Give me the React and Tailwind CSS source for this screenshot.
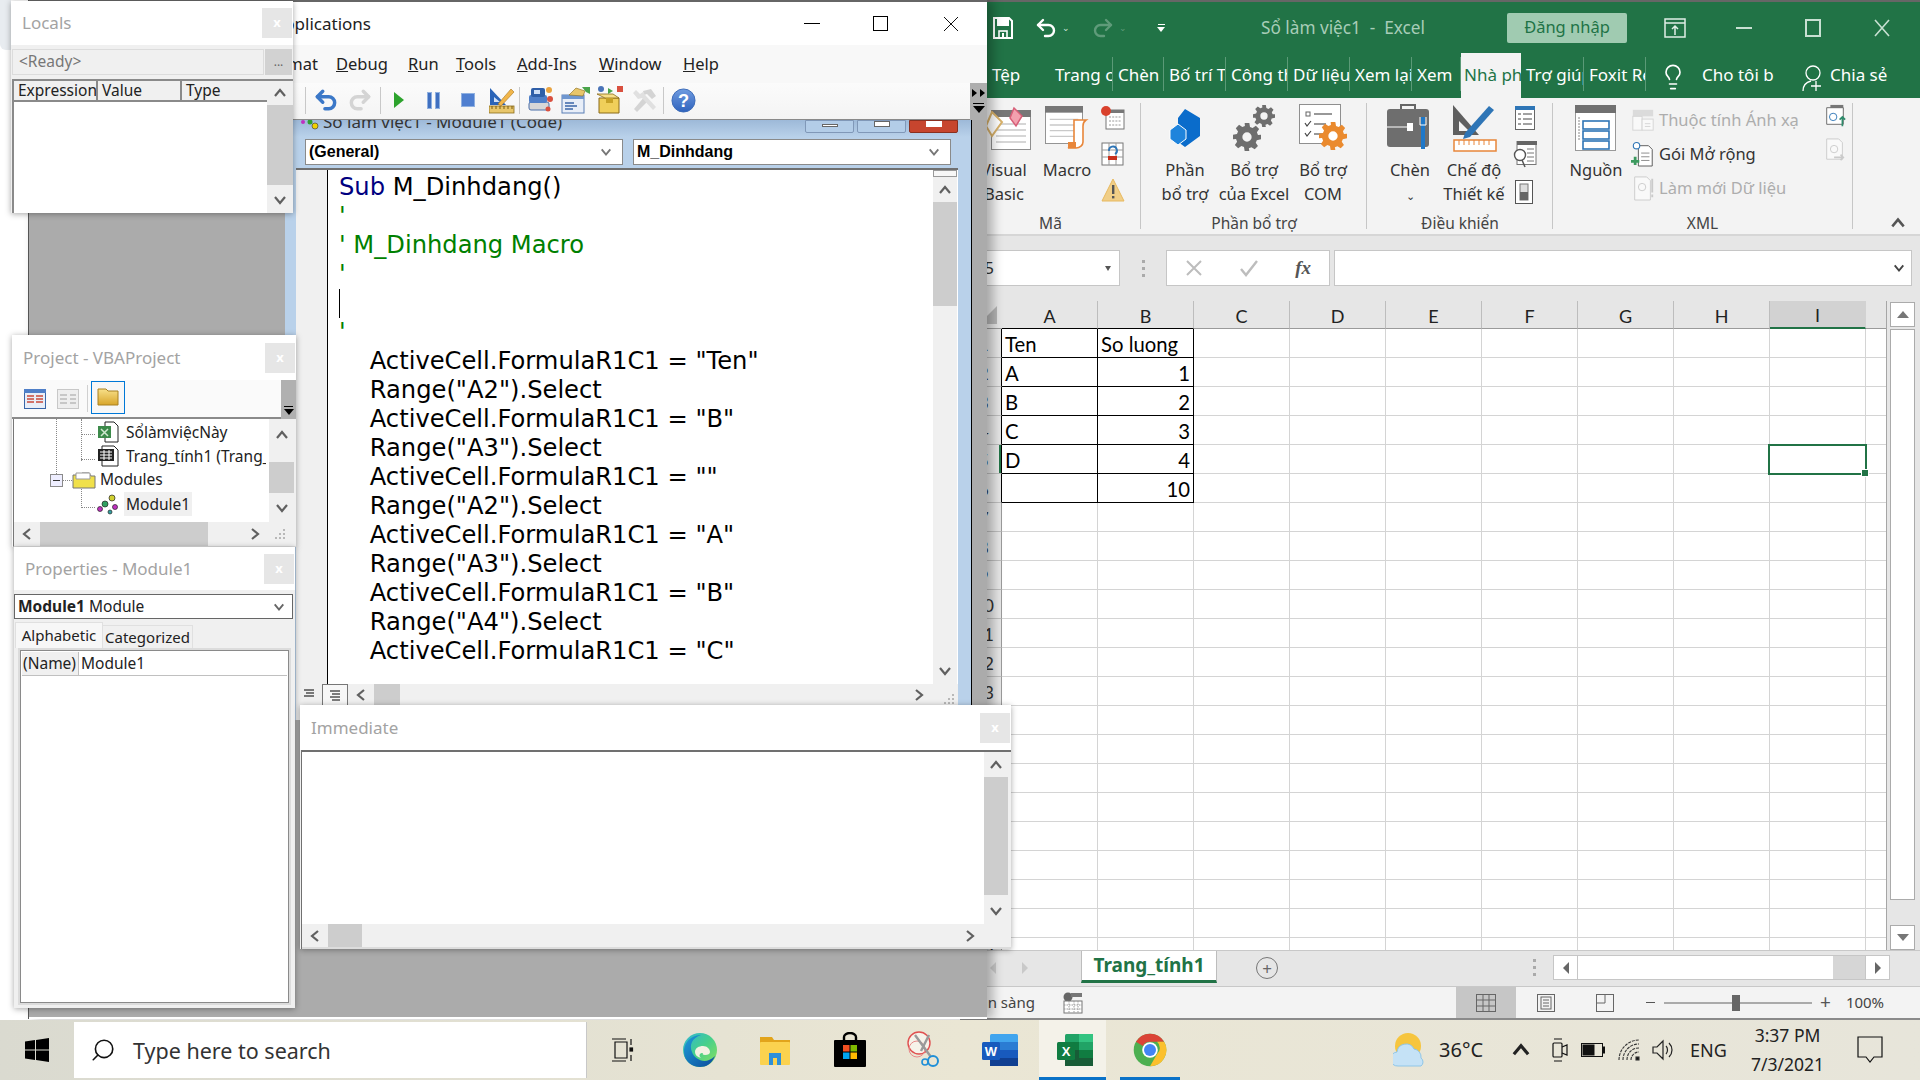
import React from "react";
import { Undo2, Redo2, Lightbulb, Search } from "lucide-react";

const Chev = ({ d = "up", s = 14, c = "#606060" }) => {
  const p = { up: "M2 10 L7 4 L12 10", down: "M2 4 L7 10 L12 4", left: "M10 2 L4 7 L10 12", right: "M4 2 L10 7 L4 12" }[d];
  return (<svg width={s} height={s} viewBox="0 0 14 14" fill="none"><path d={p} stroke={c} strokeWidth="2.2" /></svg>);
};
const Grip = () => (
  <svg width="12" height="12" viewBox="0 0 12 12" fill="#b8b8b8"><rect x="9" y="1" width="2" height="2"/><rect x="5" y="5" width="2" height="2"/><rect x="9" y="5" width="2" height="2"/><rect x="1" y="9" width="2" height="2"/><rect x="5" y="9" width="2" height="2"/><rect x="9" y="9" width="2" height="2"/></svg>
);
const VScroll = ({ w, before, thumb, after }) => (
  <div className={`flex flex-col h-full bg-[#f0f0f0] shrink-0 ${w}`}>
    <div className={`flex justify-center items-center ${before}`}><Chev d="up" /></div>
    <div className={`bg-[#cdcdcd] ${thumb}`} />
    <div className="flex-1" />
    <div className={`flex justify-center items-center ${after}`}><Chev d="down" /></div>
  </div>
);
const XBtn = () => (
  <div className="w-[30px] h-[30px] bg-[#e6e6e6] flex items-center justify-center text-white text-[13px] font-bold">x</div>
);
const ToolTitle = ({ title, h = "h-[45px]", pl = "pl-[11px]" }) => (
  <div className={`${h} ${pl} pr-px flex items-center justify-between bg-white shrink-0`}>
    <span className="text-[17px] text-[#a3a3a3]">{title}</span>
    <XBtn />
  </div>
);

/* toolbar icons */
const VbDesign = () => (
  <svg width="26" height="28" viewBox="0 0 26 28"><path d="M1 2 L1 19 L17 19 Z" fill="#2a64b8"/><path d="M5 11 L5 16 L11 16Z" fill="#cfe0f7"/><rect x="0" y="20" width="25" height="7" fill="#e8c66a" stroke="#8a6b1a" strokeWidth=".8"/><path d="M3 20v3M7 20v3M11 20v3M15 20v3M19 20v3M23 20v3" stroke="#7a5b10"/><path d="M9 18 L22 3 L25 6 L12 20 Z" fill="#f1b64a" stroke="#a8741a" strokeWidth=".6"/></svg>
);
const VbProj = () => (
  <svg width="26" height="30" viewBox="0 0 26 30"><rect x="2" y="17" width="20" height="8" rx="2" fill="#d7d7d7" stroke="#4b6ea8"/><rect x="2" y="10" width="18" height="8" rx="2" fill="#4f7fc8"/><rect x="4" y="3" width="14" height="9" rx="2" fill="#2f5fa8"/><rect x="7" y="5" width="6" height="4" fill="#cfe0f7"/><circle cx="22" cy="5" r="3" fill="#e9a33f"/><circle cx="23" cy="14" r="3" fill="#d9503f"/><circle cx="21" cy="24" r="2.5" fill="#d9503f"/></svg>
);
const VbProps = () => (
  <svg width="30" height="28" viewBox="0 0 30 28"><rect x="1" y="9" width="22" height="18" fill="#e8eef8" stroke="#5a7fb5"/><rect x="1" y="9" width="22" height="4" fill="#6f97d0"/><path d="M4 17h9M4 20h12M4 23h8" stroke="#3a66a8" strokeWidth="1.4"/><path d="M8 9 L15 2 L24 5 L22 10 Z" fill="#e8c66a" stroke="#8a6b1a" strokeWidth=".6"/><path d="M21 1h8v7l-4-2z" fill="#4aa44a"/></svg>
);
const VbBox = () => (
  <svg width="28" height="30" viewBox="0 0 28 30"><path d="M3 13h20v15H3z" fill="#f0cf5a" stroke="#8a6b1a"/><path d="M1 9l8 4h14l-6-4z" fill="#f7e08a" stroke="#8a6b1a" strokeWidth=".8"/><rect x="10" y="13" width="7" height="5" fill="#c7a227"/><circle cx="5" cy="4" r="3" fill="#4a74b8"/><path d="M12 3l5 3-5 3z" fill="#4aa44a"/><rect x="21" y="1" width="6" height="6" fill="#d9503f"/></svg>
);
const VbTools = () => (
  <svg width="26" height="26" viewBox="0 0 26 26" fill="#d4d4d4"><path d="M3 22 L14 9 L18 13 L6 25 Z"/><path d="M12 4 L20 2 L25 9 L21 12 L16 7 L13 8 Z"/><path d="M22 23 L11 11 L7 12 L2 6 L5 3 L9 7 L12 5 L15 9 L25 20 Z" fill="#e0e0e0"/></svg>
);
const VbHelp = () => (
  <svg width="25" height="25" viewBox="0 0 26 26"><defs><linearGradient id="hg" x1="0" y1="0" x2="0" y2="1"><stop offset="0" stopColor="#6f9be0"/><stop offset="1" stopColor="#2f63bd"/></linearGradient></defs><circle cx="13" cy="13" r="12" fill="url(#hg)" stroke="#3d6cb8"/><text x="13" y="20" textAnchor="middle" fontSize="19" fontWeight="700" fill="#fff" fontFamily="Liberation Sans">?</text></svg>
);
const TbSep = ({ mx = "" }) => <div className={`w-px h-[27px] bg-[#c8c8c8] ${mx}`} />;

/* ribbon icons */
const Sheet = ({ w = 40, h = 40, header = true }) => (
  <svg width={w} height={h} viewBox="0 0 40 40"><rect x=".5" y=".5" width="39" height="39" fill="#fff" stroke="#8f8f8f"/>{header && <rect x="0" y="0" width="40" height="7" fill="#777"/>}<path d="M5 14h30M5 20h30M5 26h30M5 32h30" stroke="#c9c9c9" strokeWidth="1.4"/></svg>
);
const RVisual = () => (
  <div className="relative w-[48px] h-[44px]">
    <div className="absolute left-[6px] top-[4px]"><Sheet w={42} h={40} /></div>
    <svg className="absolute left-0 top-0" width="48" height="36" viewBox="0 0 48 36"><path d="M8 6 L18 16 L8 30 L2 20Z" fill="#fff" stroke="#d9b26a" strokeWidth="2"/><path d="M30 2 L38 10 L32 20 L26 12Z" fill="#f2a0ae" stroke="#d75f78" strokeWidth="1.5"/></svg>
  </div>
);
const RMacro = () => (
  <div className="relative w-[46px] h-[44px]">
    <Sheet w={40} h={38} />
    <svg className="absolute right-0 bottom-0" width="24" height="32" viewBox="0 0 24 32"><path d="M8 2h12c-3 2-3 4-3 6v16c0 3-3 6-7 6H2c3-1 6-2 6-6z" fill="#fff" stroke="#e8863a" strokeWidth="1.6"/><path d="M2 24h8v6H2z" fill="#e8863a"/></svg>
  </div>
);
const SmallSheet = ({ dot }) => (
  <div className="relative w-[24px] h-[24px]">
    <svg width="24" height="24" viewBox="0 0 24 24"><rect x="5" y="4" width="18" height="19" fill="#fff" stroke="#777"/><rect x="5" y="4" width="18" height="3" fill="#777"/><path d="M8 11h12M8 15h12M8 19h12" stroke="#999" strokeDasharray="2 1.2"/>{dot && <circle cx="5" cy="5" r="5" fill="#d9412c"/>}</svg>
  </div>
);
const SmallRecord = () => (
  <svg width="24" height="24" viewBox="0 0 24 24"><rect x="1" y="1" width="21" height="22" fill="#fff" stroke="#777"/><path d="M1 8h21M1 15h21M8 1v22M15 1v22" stroke="#999"/><rect x="7" y="14" width="9" height="4" fill="#c9301c"/><path d="M8 9a4 4 0 1 1 6 3" fill="none" stroke="#2e75b6" strokeWidth="1.8"/></svg>
);
const SmallWarn = () => (
  <svg width="24" height="24" viewBox="0 0 24 24"><path d="M12 1 L23 23 H1 Z" fill="#f0ce87" stroke="#e8b95f"/><rect x="11" y="7" width="2.4" height="9" fill="#555"/><rect x="11" y="18" width="2.4" height="2.4" fill="#555"/></svg>
);
const RHex = () => (
  <svg width="34" height="38" viewBox="0 0 34 38"><path d="M17 0 L32 9 V27 L17 38 L2 27 V22 L10 16 V9Z" fill="#0a6ccb"/><path d="M2 21 L10 15 L18 21 V30 L10 36 L2 30Z" fill="#1f84dc" stroke="#fff" strokeWidth="1"/></svg>
);
const Gear = ({ size, fill = "#6e6e6e" }) => (
  <svg width={size} height={size} viewBox="0 0 24 24"><path fill={fill} fillRule="evenodd" d="M10 0h4l.6 3.4 2.2.9L19.6 2.4l2.8 2.8-1.9 2.8.9 2.2L24 10v4l-3.6.8-.9 2.2 1.9 2.8-2.8 2.8-2.8-1.9-2.2.9L14 24h-4l-.6-3.4-2.2-.9-2.8 1.9-2.8-2.8 1.9-2.8-.9-2.2L0 14v-4l3.4-.6.9-2.2-1.9-2.8 2.8-2.8 2.8 1.9 2.2-.9zM12 8a4 4 0 1 0 0 8 4 4 0 0 0 0-8z"/></svg>
);
const RGears = () => (
  <div className="relative w-[42px] h-[46px]">
    <div className="absolute right-0 top-0"><Gear size={22} /></div>
    <div className="absolute left-0 bottom-0"><Gear size={28} /></div>
  </div>
);
const RCom = () => (
  <div className="relative w-[48px] h-[48px]">
    <svg width="42" height="40" viewBox="0 0 42 40"><rect x=".5" y=".5" width="41" height="39" fill="#fff" stroke="#8f8f8f"/><rect x="7" y="8" width="4" height="4" fill="none" stroke="#666"/><path d="M15 10h18M15 20h12M15 30h10" stroke="#777" strokeWidth="1.4"/><path d="M6 19l2 3 4-5M6 29l2 3 4-5" fill="none" stroke="#444" strokeWidth="1.2"/></svg>
    <div className="absolute right-0 bottom-[2px]"><Gear size={28} fill="#ea8a2e" /></div>
  </div>
);
const RChen = () => (
  <svg width="46" height="50" viewBox="0 0 46 50"><path d="M14 6V2h14v4" fill="none" stroke="#666" strokeWidth="2"/><rect x="0" y="6" width="42" height="38" rx="3" fill="#6e6e6e"/><path d="M0 24h26" stroke="#fff"/><rect x="20" y="20" width="6" height="8" fill="#fff"/><path d="M36 14v32" stroke="#1f78c8" strokeWidth="4"/><path d="M33 14v8h6v-8" fill="none" stroke="#fff" strokeWidth="1"/></svg>
);
const RDesign = () => (
  <svg width="46" height="50" viewBox="0 0 46 50"><path d="M2 2 V32 L28 32 Z" fill="#5f5f5f"/><path d="M8 18 V28 L18 28Z" fill="#f3f3f3"/><path d="M14 30 L38 3 L43 7 L19 34 L12 36Z" fill="#2e75b6"/><rect x="3" y="37" width="42" height="11" fill="#fff" stroke="#e8863a" strokeWidth="1.5"/><path d="M8 37v5M13 37v5M18 37v5M23 37v5M28 37v5M33 37v5M38 37v5" stroke="#e8863a"/></svg>
);
const SmList = () => (
  <svg width="20" height="24" viewBox="0 0 20 24"><rect x=".5" y=".5" width="19" height="23" fill="#fff" stroke="#666"/><rect x="0" y="0" width="20" height="4" fill="#2e75b6"/><path d="M3 8h3M8 8h9M3 13h3M8 13h9M3 18h3M8 18h9" stroke="#444"/></svg>
);
const SmLens = () => (
  <svg width="24" height="28" viewBox="0 0 24 28"><rect x="4" y=".5" width="19" height="23" fill="#fff" stroke="#777"/><rect x="4" y="0" width="20" height="4" fill="#666"/><path d="M14 8h7M14 12h7M14 16h7M14 20h7" stroke="#777"/><circle cx="7" cy="14" r="5.5" fill="#fff" stroke="#555" strokeWidth="1.4"/><path d="M9 19l3 7" stroke="#555" strokeWidth="1.5"/></svg>
);
const SmToggle = () => (
  <svg width="20" height="24" viewBox="0 0 20 24"><rect x=".5" y=".5" width="17" height="23" fill="#fff" stroke="#555"/><rect x="5" y="4" width="8" height="16" fill="#ddd" stroke="#777"/><rect x="5" y="12" width="8" height="8" fill="#666"/></svg>
);
const RSource = () => (
  <svg width="42" height="46" viewBox="0 0 42 46"><rect x=".5" y=".5" width="40" height="45" fill="#fff" stroke="#999"/><rect x="0" y="0" width="41" height="8" fill="#707070"/><rect x="8" y="16" width="26" height="8" fill="none" stroke="#2e75b6" strokeWidth="1.6"/><rect x="8" y="26" width="26" height="8" fill="none" stroke="#2e75b6" strokeWidth="1.6"/><rect x="8" y="36" width="26" height="8" fill="none" stroke="#2e75b6" strokeWidth="1.6"/><path d="M4 12v24" stroke="#888" strokeDasharray="2 1"/></svg>
);
const XmlTiny = ({ kind, faded }) => (
  <svg width="24" height="26" viewBox="0 0 26 26" opacity={faded ? 0.55 : 1}>
    {kind === "map" && <><rect x="2" y="2" width="22" height="7" fill="#c9c9c9"/><rect x="2" y="9" width="10" height="15" fill="#fff" stroke="#bbb"/><rect x="12" y="12" width="12" height="12" fill="#fff" stroke="#bbb"/><path d="M15 17h6M15 20h6" stroke="#bbb"/></>}
    {kind === "pack" && <><path d="M8 4h11l4 4v18H8z" fill="#fff" stroke="#555"/><path d="M11 12h9M11 16h9M11 20h9" stroke="#888"/><circle cx="6" cy="4" r="3.5" fill="#fff" stroke="#2e75b6" strokeWidth="1.2"/><path d="M0 21h9M4.5 16v9" stroke="#3c9a5f" strokeWidth="3"/></>}
    {kind === "refresh" && <><path d="M4 1h13l4 4v21H4z" fill="#fff" stroke="#aaa"/><circle cx="12" cy="12" r="4" fill="none" stroke="#aaa"/><path d="M23 3v15M23 20v3" stroke="#aaa" strokeWidth="2"/></>}
    {kind === "imp" && <><rect x="8" y="1" width="14" height="6" fill="#777"/><path d="M4 4h18v18H4z" fill="#fff" stroke="#666"/><circle cx="11" cy="14" r="4" fill="#fff" stroke="#2e75b6"/><path d="M21 24v-10m-3 3l3-3 3 3" fill="none" stroke="#2e8b6b" strokeWidth="1.8"/></>}
    {kind === "exp" && <><path d="M4 1h13l4 4v18H4z" fill="#fff" stroke="#aaa"/><circle cx="12" cy="12" r="4" fill="none" stroke="#aaa"/><path d="M12 21h10m-3-3l3 3-3 3" fill="none" stroke="#aaa" strokeWidth="1.8"/></>}
  </svg>
);

const Big = ({ w, icon, l1, l2 }) => (
  <div className={`flex flex-col items-center ${w} whitespace-nowrap`}>
    <div className="h-[60px] flex items-center justify-center shrink-0">{icon}</div>
    <div className="leading-[24px]">{l1}</div>
    <div className="leading-[24px]">{l2}</div>
  </div>
);
const Group = ({ w, label, children, labelPl = "" }) => (
  <div className={`${w} shrink-0 flex flex-col relative h-full`}>
    <div className="flex h-[114px]">{children}</div>
    <div className={`h-[24px] leading-[27px] text-center text-[15.5px] text-[#444] ${labelPl}`}>{label}</div>
    <div className="absolute right-0 top-[5px] h-[126px] w-px bg-[#c6c6c6]" />
  </div>
);

const tabs = [
  ["Trang chủ", "w-[63px]"], ["Chèn", "w-[51px]"], ["Bố trí Trang", "w-[62px]"], ["Công thức", "w-[62px]"], ["Dữ liệu", "w-[62px]"],
  ["Xem lại", "w-[62px]"], ["Xem", "w-[49px]"], ["Nhà phát triển", "w-[60px]"], ["Trợ giúp", "w-[63px]"], ["Foxit Reader PDF", "w-[62px]"],
];
const colNames = ["A", "B", "C", "D", "E", "F", "G", "H", "I"];
const tableData = [["Ten", "So luong"], ["A", "1"], ["B", "2"], ["C", "3"], ["D", "4"], ["", "10"]];

const Sheets = () => (
  <div className="flex-1 flex min-h-0 bg-[#e6e6e6] relative">
    <div className="w-[927px] border-r border-[#a6a6a6] flex flex-col relative overflow-hidden font-['Lato',sans-serif] text-[20.3px] text-black">
      <div className="flex h-[28px] shrink-0 text-[#222] text-[18px]">
        <div className="w-[42px] relative shrink-0 border-b border-[#9a9a9a]">
          <div className="absolute right-[5px] bottom-[4px] w-0 h-0 border-l-[18px] border-l-transparent border-b-[18px] border-b-[#b5b5b5]" />
        </div>
        {colNames.map((c, i) => (
          <div key={c} className={`w-[96px] shrink-0 flex items-center justify-center pt-[3px] border-r ${c === "I" ? "bg-[#d2d2d2] border-b-2 border-b-[#217346] border-r-[#d2d2d2]" : "border-r-[#bdbdbd] border-b " + (i < 2 ? "border-b-black" : "border-b-[#9a9a9a]")}`}>{c}</div>
        ))}
        <div className="flex-1 border-b border-[#9a9a9a]" />
      </div>
      {Array.from({ length: 22 }, (_, r) => (
        <div key={r} className="flex h-[29px] shrink-0">
          <div className={`w-[42px] shrink-0 pl-[6px] text-center bg-[#e6e6e6] text-[#333] text-[18px] leading-[30px] border-r border-b border-b-[#bdbdbd] ${r < 6 ? "border-r-black" : "border-r-[#9a9a9a]"} ${r === 4 ? "shadow-[inset_-2px_0_0_#217346]" : ""}`}>{r + 1}</div>
          {colNames.map((c, i) => {
            const inTable = r < 6 && i < 2;
            const v = inTable ? tableData[r][i] : "";
            return (
              <div key={c} className={`w-[96px] shrink-0 bg-white border-r border-b leading-[31px] px-[3px] whitespace-nowrap ${inTable ? "border-black" : "border-[#d4d4d4]"} ${i === 1 && r > 0 ? "text-right" : ""}`}>{v}</div>
            );
          })}
          <div className="flex-1 bg-white border-b border-[#d4d4d4]" />
        </div>
      ))}
      <div className="absolute left-[808px] top-[143px] w-[99px] h-[31px] border-2 border-[#217346]">
        <div className="absolute -right-[4px] -bottom-[4px] w-[6px] h-[6px] bg-[#217346] border border-white box-content" />
      </div>
    </div>
    <div className="flex-1 flex flex-col pl-[3px] pr-[5px] pt-px">
      <div className="h-[25px] bg-white border border-[#ababab] flex items-center justify-center"><div className="w-0 h-0 border-x-[6px] border-x-transparent border-b-[7px] border-b-[#777]" /></div>
      <div className="h-[571px] mt-[2px] bg-white border border-[#ababab]" />
      <div className="flex-1" />
      <div className="h-[25px] bg-white border border-[#ababab] flex items-center justify-center"><div className="w-0 h-0 border-x-[6px] border-x-transparent border-t-[7px] border-t-[#777]" /></div>
    </div>
  </div>
);

const Excel = () => (
  <div className="absolute left-[960px] top-0 w-[960px] h-[1020px] flex flex-col text-[16.5px] text-[#333] border-t-2 border-[#666]">
    {/* title row */}
    <div className="h-[51px] shrink-0 bg-[#217346] flex items-center relative text-white">
      <div className="ml-[33px] w-[20px] flex"><svg width="20" height="22" viewBox="0 0 20 22" fill="none"><path d="M1 1h15l3 3v17H1z" stroke="#fff" strokeWidth="2"/><rect x="4" y="1" width="12" height="8" fill="#fff"/><rect x="6" y="14" width="8" height="7" fill="none" stroke="#fff" strokeWidth="1.6"/><rect x="9" y="16" width="2" height="4" fill="#fff"/></svg></div>
      <div className="ml-[21px] flex"><Undo2 size={24} strokeWidth={2.4} color="#fff" /></div>
      <div className="ml-[4px] text-[9px] text-[#cfe3d8]">⌄</div>
      <div className="ml-[21px] flex"><Redo2 size={24} strokeWidth={2.4} color="#5f9b7a" /></div>
      <div className="ml-[4px] text-[9px] text-[#5f9b7a]">⌄</div>
      <div className="ml-[30px] flex flex-col items-center gap-[2px] w-[8px]"><div className="w-[7px] h-px bg-white" /><div className="w-0 h-0 border-x-[4px] border-x-transparent border-t-[5px] border-t-white" /></div>
      <div className="ml-[96px] w-[169px] whitespace-pre text-[17.2px] text-[#a8cdb8]">Sổ làm việc1  -  Excel</div>
      <div className="ml-[77px] w-[120px] h-[30px] rounded-[2px] bg-[#a0cbb1] text-[#217346] text-[16.5px] flex items-center justify-center">Đăng nhập</div>
      <div className="ml-[37px] flex"><svg width="22" height="22" viewBox="0 0 22 22" fill="none" stroke="#dfeee6" strokeWidth="1.5"><rect x="1" y="2" width="20" height="18"/><path d="M1 6h20M11 18V9m-3 3l3-3 3 3"/></svg></div>
      <div className="ml-[50px] w-[16px] h-[2px] bg-[#c8e0d2]" />
      <div className="ml-[53px] w-[16px] h-[18px] border-2 border-[#c8e0d2]" />
      <div className="ml-[52px] flex"><svg width="18" height="18" viewBox="0 0 18 18" stroke="#c8e0d2" strokeWidth="1.6"><path d="M2 1l14 16M16 1L2 17"/></svg></div>
    </div>
    {/* tabs */}
    <div className="h-[45px] shrink-0 bg-[#217346] flex text-white text-[17px]">
      <div className="w-[90px] pl-[32px] pt-[6px] leading-[32px]">Tệp</div>
      {tabs.map(([t, w]) => {
        const active = t === "Nhà phát triển";
        return (
          <div key={t} className={`${w} shrink-0 overflow-hidden whitespace-nowrap ${active ? "pl-[3px] bg-[#f3f3f3] text-[#217346] pt-[6px] leading-[32px]" : "pl-[5px] relative leading-[32px] pt-[6px]"}`}>
            {t}
            {!active && <div className="absolute right-0 top-[4px] h-[34px] w-px bg-[#5b9a77]" />}
          </div>
        );
      })}
      <div className="ml-[13px] mt-[10px]"><Lightbulb size={28} strokeWidth={1.4} color="#fff" /></div>
      <div className="ml-[15px] w-[100px] leading-[32px] pt-[6px] overflow-hidden whitespace-nowrap">Cho tôi b</div>
      <div className="flex mt-[10px]"><svg width="24" height="30" viewBox="0 0 24 30" fill="none" stroke="#fff" strokeWidth="1.3"><circle cx="11" cy="10" r="7"/><path d="M1 28c0-6 4-9 8-10M14 18v10M9 23h10"/></svg></div>
      <div className="ml-[4px] leading-[32px] pt-[6px]">Chia sẻ</div>
    </div>
    {/* ribbon */}
    <div className="h-[138px] shrink-0 bg-[#f3f3f3] border-b-2 border-[#d6d6d6] flex">
      <Group w="w-[181px]" label="Mã">
        <div className="ml-[9px]" />
        <Big w="w-[70px]" icon={<div className="pl-[8px]"><RVisual /></div>} l1="Visual" l2="Basic" />
        <Big w="w-[56px]" icon={<RMacro />} l1="Macro" l2="" />
        <div className="w-[35px] flex flex-col items-center pt-[8px] gap-[12px]"><SmallSheet dot /><SmallRecord /><SmallWarn /></div>
      </Group>
      <Group w="w-[226px]" label="Phần bổ trợ">
        <div className="ml-[8px]" />
        <Big w="w-[72px]" icon={<RHex />} l1="Phần" l2="bổ trợ" />
        <Big w="w-[66px]" icon={<RGears />} l1="Bổ trợ" l2="của Excel" />
        <Big w="w-[72px]" icon={<RCom />} l1="Bổ trợ" l2="COM" />
      </Group>
      <Group w="w-[186px]" label="Điều khiển">
        <div className="ml-[8px]" />
        <Big w="w-[70px]" icon={<RChen />} l1="Chèn" l2={<span className="text-[11px]">⌄</span>} />
        <Big w="w-[58px]" icon={<RDesign />} l1="Chế độ" l2="Thiết kế" />
        <div className="w-[44px] flex flex-col items-center pt-[8px] gap-[11px]"><SmList /><SmLens /><SmToggle /></div>
      </Group>
      <Group w="w-[300px]" label="XML" labelPl="pr-[1px]">
        <div className="ml-[8px]" />
        <Big w="w-[70px]" icon={<RSource />} l1="Nguồn" l2="" />
        <div className="w-[195px] flex flex-col pt-[5px] text-[16.5px] whitespace-nowrap">
          <div className="h-[34px] flex items-center gap-[4px] text-[#adadad]"><XmlTiny kind="map" faded />Thuộc tính Ánh xạ</div>
          <div className="h-[34px] flex items-center gap-[4px] text-[#333]"><XmlTiny kind="pack" />Gói Mở rộng</div>
          <div className="h-[34px] flex items-center gap-[4px] text-[#adadad]"><XmlTiny kind="refresh" faded />Làm mới Dữ liệu</div>
        </div>
        <div className="flex flex-col pt-[5px] gap-[8px] -ml-[3px]"><XmlTiny kind="imp" /><XmlTiny kind="exp" faded /></div>
      </Group>
      <div className="flex-1 flex items-end justify-end pr-[14px] pb-[3px]"><Chev d="up" s={16} c="#555" /></div>
    </div>
    {/* formula */}
    <div className="h-[65px] shrink-0 bg-[#e6e6e6] flex pt-[14px] relative">
      <div className="w-[160px] h-[36px] bg-white border border-[#c6c6c6] flex items-center justify-between pl-[15px] pr-[8px]">
        <span className="pl-[3px]">I5</span>
        <div className="w-0 h-0 border-x-[3px] border-x-transparent border-t-[5px] border-t-[#555]" />
      </div>
      <div className="w-[46px] flex justify-center items-center h-[36px]"><div className="flex flex-col gap-[4px]"><div className="w-[3px] h-[3px] bg-[#aaa]" /><div className="w-[3px] h-[3px] bg-[#aaa]" /><div className="w-[3px] h-[3px] bg-[#aaa]" /></div></div>
      <div className="w-[164px] h-[36px] bg-white border border-[#c6c6c6] flex items-center justify-between px-[18px]">
        <svg width="18" height="18" viewBox="0 0 18 18" stroke="#bdbdbd" strokeWidth="2"><path d="M2 2l14 14M16 2L2 16"/></svg>
        <svg width="20" height="18" viewBox="0 0 20 18" fill="none" stroke="#bdbdbd" strokeWidth="2.4"><path d="M2 10l5 6L18 2"/></svg>
        <span className="font-['Liberation_Serif',serif] italic font-bold text-[19px] text-[#555]">fx</span>
      </div>
      <div className="ml-[4px] w-[578px] h-[36px] bg-white border border-[#c6c6c6] flex items-center justify-end pr-[6px]"><Chev d="down" s={12} c="#444" /></div>
    </div>
    <Sheets />
    {/* tabs row */}
    <div className="h-[36px] shrink-0 bg-[#e6e6e6] border-t border-[#c8c8c8] flex items-start relative">
      <div className="w-[28px]" />
      <div className="flex gap-[26px] mt-[11px] ml-[2px]"><div className="w-0 h-0 border-y-[6px] border-y-transparent border-r-[6px] border-r-[#c9c9c9]" /><div className="w-0 h-0 border-y-[6px] border-y-transparent border-l-[6px] border-l-[#c9c9c9]" /></div>
      <div className="ml-[53px] w-[136px] h-[32px] bg-white border-x border-[#bdbdbd] border-b-[3px] border-b-[#217346] text-center text-[19px] font-bold text-[#217346] leading-[28px]">Trang_tính1</div>
      <div className="ml-[39px] mt-[6px] w-[22px] h-[22px] rounded-full border border-[#777] flex items-center justify-center text-[17px] leading-none text-[#666]">+</div>
      <div className="ml-[255px] mt-[8px] flex flex-col gap-[4px]"><div className="w-[3px] h-[3px] bg-[#aaa]" /><div className="w-[3px] h-[3px] bg-[#aaa]" /><div className="w-[3px] h-[3px] bg-[#aaa]" /></div>
      <div className="ml-[17px] mt-[4px] h-[25px] w-[337px] flex border border-[#c6c6c6]">
        <div className="w-[24px] bg-white border-r border-[#c6c6c6] flex items-center justify-center"><div className="w-0 h-0 border-y-[6px] border-y-transparent border-r-[6px] border-r-[#666]" /></div>
        <div className="w-[255px] bg-white" />
        <div className="flex-1 bg-[#d6d6d6]" />
        <div className="w-[24px] bg-white border-l border-[#c6c6c6] flex items-center justify-center"><div className="w-0 h-0 border-y-[6px] border-y-transparent border-l-[6px] border-l-[#666]" /></div>
      </div>
    </div>
    {/* status */}
    <div className="h-[34px] shrink-0 bg-[#f3f3f3] border-t border-[#c8c8c8] border-b-2 border-b-[#8a8a8a] flex items-center text-[15px] text-[#444]">
      <div className="w-[103px] pl-[11px] whitespace-nowrap">Sẵn sàng</div>
      <div className="w-[30px] flex"><svg width="20" height="22" viewBox="0 0 20 22"><circle cx="5" cy="5" r="4.5" fill="#666"/><rect x="8" y="1" width="11" height="4" fill="#777"/><rect x="1" y="9" width="18" height="12" fill="#fff" stroke="#777"/><path d="M1 13h18M1 17h18M6 9v12M11 9v12M15 9v12" stroke="#999" strokeDasharray="1.5 1"/></svg></div>
      <div className="w-[363px]" />
      <div className="w-[60px] h-full bg-[#c6c6c6] flex items-center justify-center"><svg width="20" height="18" viewBox="0 0 20 18" fill="none" stroke="#666"><rect x=".5" y=".5" width="19" height="17"/><path d="M7 0v18M13 0v18M0 6h20M0 12h20"/></svg></div>
      <div className="w-[60px] flex justify-center"><svg width="18" height="18" viewBox="0 0 18 18" fill="none" stroke="#666"><rect x=".5" y=".5" width="17" height="17"/><rect x="4" y="3" width="10" height="12"/><path d="M6 6h6M6 9h6M6 12h6"/></svg></div>
      <div className="w-[58px] flex justify-center"><svg width="18" height="18" viewBox="0 0 18 18" fill="none" stroke="#666"><rect x=".5" y=".5" width="17" height="17"/><path d="M9 0v9H0"/></svg></div>
      <div className="w-[9px] ml-[12px] h-[1.5px] bg-[#555]" />
      <div className="ml-[9px] w-[148px] h-[2px] bg-[#aaa] relative"><div className="absolute left-[68px] -top-[7px] w-[8px] h-[16px] bg-[#666]" /></div>
      <div className="ml-[8px] text-[19px] leading-none text-[#555]">+</div>
      <div className="ml-[15px] text-[15px]">100%</div>
    </div>
  </div>
);

const code = [
  ["Sub M_Dinhdang()", "sub"], ["'", "c"], ["' M_Dinhdang Macro", "c"], ["'", "c"], ["", "caret"], ["'", "c"],
  ["    ActiveCell.FormulaR1C1 = \"Ten\"", ""], ["    Range(\"A2\").Select", ""], ["    ActiveCell.FormulaR1C1 = \"B\"", ""], ["    Range(\"A3\").Select", ""],
  ["    ActiveCell.FormulaR1C1 = \"\"", ""], ["    Range(\"A2\").Select", ""], ["    ActiveCell.FormulaR1C1 = \"A\"", ""], ["    Range(\"A3\").Select", ""],
  ["    ActiveCell.FormulaR1C1 = \"B\"", ""], ["    Range(\"A4\").Select", ""], ["    ActiveCell.FormulaR1C1 = \"C\"", ""],
];

const Bars = ({ n }) => (
  <svg width="12" height="14" viewBox="0 0 12 14" stroke="#000"><path d={n === 1 ? "M1 2h10M3 5h8M1 8h10" : "M1 2h10M3 5h8M1 8h10M3 11h8"} /></svg>
);

const Combo = ({ w, text }) => (
  <div className={`${w} h-[26px] bg-white border border-[#8a8a8a] flex items-center justify-between pl-[3px] pr-[10px] font-['Liberation_Sans',sans-serif] font-bold text-[16px] text-black`}>
    {text}<Chev d="down" s={12} c="#777" />
  </div>
);

const CodeWindow = () => (
  <div className="absolute left-[256px] top-0 w-[687px] h-[600px] bg-[#b9d1ea] border-r border-black flex flex-col overflow-hidden">
    <div className="h-[17px] shrink-0 bg-gradient-to-b from-[#9db9d8] to-[#b9d1ea] relative overflow-hidden">
      <div className="absolute left-[15px] -top-[11px] flex items-center gap-[3px] text-[17px] text-[#333] whitespace-nowrap"><svg width="20" height="16" viewBox="0 0 20 16"><circle cx="3" cy="8" r="2" fill="#c030c0"/><circle cx="10" cy="8" r="2.5" fill="#30a030"/><circle cx="15" cy="12" r="3" fill="#f0d000" stroke="#333" strokeWidth=".6"/></svg>Sổ làm việc1 - Module1 (Code)</div>
      <div className="absolute right-[13px] top-0 flex gap-[3px]">
        <div className="w-[49px] h-[13px] bg-[#b3cde8] border border-[#8098b8] rounded-b-[2px] flex justify-center"><div className="w-[16px] h-[3px] mt-[3px] bg-white border border-[#666]" /></div>
        <div className="w-[49px] h-[13px] bg-[#b3cde8] border border-[#8098b8] rounded-b-[2px] flex justify-center"><div className="w-[16px] h-[6px] bg-white border border-[#666]" /></div>
        <div className="w-[49px] h-[13px] bg-[#c7452e] border border-[#8a3020] rounded-b-[2px] flex justify-center"><div className="w-[16px] h-[6px] bg-white" /></div>
      </div>
    </div>
    <div className="flex flex-col flex-1 ml-[11px] mr-[13px] min-h-0">
      <div className="h-[31px] shrink-0 flex items-start pt-[2px] pl-[9px] gap-[10px]">
        <Combo w="w-[318px]" text="(General)" />
        <Combo w="w-[318px]" text="M_Dinhdang" />
      </div>
      <div className="flex-1 flex min-h-0 border-t-2 border-[#707070] bg-white">
        <div className="w-[32px] bg-[#f0f0f0] border-r border-black shrink-0" />
        <div className="w-[605px] shrink-0 pl-[11px] pt-[3px] font-['DejaVu_Sans',sans-serif] text-[24.2px] text-black whitespace-pre overflow-hidden">
          {code.map(([t, k], i) => (
            <div key={i} className={`h-[29px] leading-[29px] ${k === "c" ? "text-[#008000]" : ""}`}>
              {k === "sub" ? (<><span className="text-[#000080]">Sub</span> M_Dinhdang()</>) : k === "caret" ? <div className="w-px h-[29px] bg-black" /> : t}
            </div>
          ))}
        </div>
        <div className="w-[24px] shrink-0 bg-[#f0f0f0] flex flex-col">
          <div className="h-[7px] border border-[#999] bg-[#f7f7f7]" />
          <div className="h-[25px] flex items-center justify-center"><Chev d="up" /></div>
          <div className="h-[104px] bg-[#cdcdcd]" />
          <div className="flex-1" />
          <div className="h-[26px] flex items-center justify-center"><Chev d="down" /></div>
        </div>
      </div>
      <div className="h-[36px] shrink-0 bg-[#f0f0f0] flex items-start">
        <div className="w-[26px] h-[21px] flex items-center justify-center"><Bars n={1} /></div>
        <div className="w-[26px] h-[22px] flex items-center justify-center border-x border-t border-[#777] bg-[#f7f7f7]"><Bars n={2} /></div>
        <div className="w-[26px] h-[21px] flex items-center justify-center"><Chev d="left" /></div>
        <div className="w-[26px] h-[21px] bg-[#cdcdcd]" />
        <div className="w-[512px]" />
        <div className="h-[21px] flex items-center"><Chev d="right" /></div>
        <div className="w-[17px]" />
        <div className="h-[21px] flex items-end"><Grip /></div>
      </div>
    </div>
  </div>
);

const Locals = () => (
  <div className="absolute left-[11px] top-[1px] w-[282px] h-[212px] bg-[#f0f0f0] shadow-[0_1px_6px_rgba(0,0,0,0.35)] flex flex-col text-[15.5px] text-[#222]">
    <ToolTitle title="Locals" h="h-[44px]" />
    <div className="h-[31px] flex items-center shrink-0 pt-[2px] pl-px">
      <div className="w-[252px] h-[26px] bg-[#f0f0f0] border border-[#dcdcdc] pl-[6px] flex items-center text-[#777]">&lt;Ready&gt;</div>
      <div className="ml-[1px] w-[27px] h-[26px] bg-[#d2d2d2] flex items-center justify-center text-[#666] text-[12px]">...</div>
    </div>
    <div className="flex-1 mt-[3px] flex border-t-2 border-[#8a8a8a] border-l-2 border-l-[#8a8a8a] min-h-0 bg-white ml-px">
      <div className="flex-1 flex flex-col">
        <div className="h-[21px] flex bg-[#f0f0f0] border-b-2 border-[#8a8a8a] leading-[19px]">
          <div className="w-[84px] pl-[4px] border-r-2 border-[#8a8a8a] overflow-hidden">Expression</div>
          <div className="w-[84px] pl-[4px] border-r-2 border-[#8a8a8a]">Value</div>
          <div className="flex-1 pl-[4px]">Type</div>
        </div>
      </div>
      <VScroll w="w-[26px]" before="h-[24px]" thumb="h-[80px]" after="h-[26px]" />
    </div>
  </div>
);

const TreeRow = ({ icon, text, pad, sel }) => (
  <div className={`h-[24px] flex items-center ${pad} whitespace-nowrap`}>
    {icon}
    <span className={`ml-[5px] px-[2px] leading-[24px] ${sel ? "bg-[#f0f0f0]" : ""}`}>{text}</span>
  </div>
);

const Project = () => (
  <div className="absolute left-[12px] top-[335px] w-[284px] h-[212px] bg-[#fafafa] shadow-[0_1px_6px_rgba(0,0,0,0.35)] flex flex-col text-[15.5px] text-[#222]">
    <ToolTitle title="Project - VBAProject" />
    <div className="h-[39px] flex items-center border-b-2 border-[#8a8a8a] shrink-0 relative">
      <div className="ml-[12px] flex"><svg width="22" height="20" viewBox="0 0 22 20"><rect x=".5" y=".5" width="21" height="19" fill="#e8eef8" stroke="#3a66a8"/><rect x="0" y="0" width="22" height="4" fill="#4f7fc8"/><path d="M3 7h7M3 10h7M3 13h7M12 7h7M12 10h7M12 13h7" stroke="#c94a3a" strokeWidth="1.4"/></svg></div>
      <div className="ml-[11px] flex"><svg width="22" height="20" viewBox="0 0 22 20"><rect x=".5" y=".5" width="21" height="19" fill="#eee" stroke="#c8c8c8"/><path d="M3 6h7M3 10h7M3 14h7M13 6h6M13 10h6M13 14h6" stroke="#bbb" strokeWidth="1.6"/></svg></div>
      <div className="ml-[8px] w-px h-[27px] bg-[#d0d0d0]" />
      <div className="ml-[3px] mb-[3px] w-[34px] h-[33px] bg-[#f7f7f7] border border-[#0078d7] flex items-center justify-center"><svg width="22" height="18" viewBox="0 0 22 18"><defs><linearGradient id="fg" x1="0" y1="0" x2="0" y2="1"><stop offset="0" stopColor="#f8e08a"/><stop offset="1" stopColor="#d8a52a"/></linearGradient></defs><path d="M1 1h8l2 2h10v14H1z" fill="url(#fg)" stroke="#a88020"/></svg></div>
      <div className="absolute right-0 top-0 h-[39px] w-[15px] bg-[#b0b0b0] flex flex-col items-center justify-end pb-[4px]"><div className="w-[9px] h-px bg-black mb-[2px]" /><div className="w-0 h-0 border-x-[5px] border-x-transparent border-t-[6px] border-t-black" /></div>
    </div>
    <div className="flex-1 flex ml-[1px] min-h-0 bg-white border-l border-[#777]">
      <div className="w-[255px] shrink-0 flex flex-col relative overflow-hidden">
        <div className="pt-[1px] h-[101px] relative">
          <div className="absolute left-[42px] top-0 h-[55px] border-l border-dotted border-[#888]" />
          <div className="absolute left-[67px] top-0 h-[42px] border-l border-dotted border-[#888]" />
          <div className="absolute left-[67px] top-[15px] w-[14px] border-t border-dotted border-[#888]" />
          <div className="absolute left-[67px] top-[40px] w-[14px] border-t border-dotted border-[#888]" />
          <div className="absolute left-[67px] top-[70px] h-[19px] border-l border-dotted border-[#888]" />
          <div className="absolute left-[67px] top-[88px] w-[14px] border-t border-dotted border-[#888]" />
          <TreeRow pad="pl-[83px]" text="SổlàmviệcNày" icon={<svg className="shrink-0" width="22" height="22" viewBox="0 0 22 22"><path d="M8 1h9l4 4v16H8z" fill="#fff" stroke="#222"/><rect x="1" y="5" width="13" height="12" fill="#3c8a4a"/><path d="M4 8l7 7M11 8l-7 7" stroke="#cfe8cf" strokeWidth="1.5"/></svg>} />
          <TreeRow pad="pl-[83px]" text={<span className="inline-block w-[140px] overflow-hidden align-top">Trang_tính1 (Trang_tính1)</span>} icon={<svg className="shrink-0" width="22" height="22" viewBox="0 0 22 22"><path d="M5 1h12l4 4v16H5z" fill="#fff" stroke="#222"/><rect x="1" y="4" width="16" height="12" fill="#222"/><path d="M3 7h12M3 10h12M3 13h12M7 5v10M12 5v10" stroke="#fff"/></svg>} />
          <div className="h-[24px] flex items-center pl-[36px]">
            <div className="w-[13px] h-[13px] border border-[#8a8a8a] bg-[#eef] flex items-center justify-center"><div className="w-[7px] h-px bg-[#333]" /></div>
            <div className="w-[9px] border-t border-dotted border-[#888]" />
            <svg className="shrink-0" width="24" height="20" viewBox="0 0 24 20"><path d="M1 5h7l2-2h7l2 3h4v12H1z" fill="#f0e04a" stroke="#777"/><path d="M4 3h14v6H4z" fill="#fff" stroke="#999"/></svg>
            <span className="ml-[4px]">Modules</span>
          </div>
          <TreeRow pad="pl-[83px]" sel text="Module1" icon={<svg className="shrink-0" width="22" height="22" viewBox="0 0 22 22"><circle cx="15" cy="5" r="3" fill="#d0d030" stroke="#222" strokeWidth=".7"/><circle cx="8" cy="11" r="3" fill="#30a060" stroke="#222" strokeWidth=".7"/><circle cx="3" cy="16" r="2.5" fill="#c030c0" stroke="#222" strokeWidth=".7"/><circle cx="18" cy="14" r="2.5" fill="#c030c0" stroke="#222" strokeWidth=".7"/><circle cx="13" cy="19" r="2" fill="#30a0a0" stroke="#222" strokeWidth=".7"/></svg>} />
        </div>
      </div>
      <div className="flex-1 flex flex-col bg-[#f0f0f0] pr-[2px]">
        <div className="h-[43px] pt-[9px] flex items-start justify-center"><Chev d="up" /></div>
        <div className="h-[31px] bg-[#cdcdcd]" />
        <div className="flex-1 flex items-center justify-center"><Chev d="down" /></div>
      </div>
    </div>
    <div className="h-[24px] shrink-0 bg-[#f0f0f0] flex items-center border-l border-[#777] ml-px border-b border-b-[#dcdcdc] box-content">
      <div className="w-[26px] flex justify-center"><Chev d="left" /></div>
      <div className="w-[168px] h-full bg-[#cdcdcd]" />
      <div className="w-[40px]" />
      <Chev d="right" />
      <div className="ml-[12px] flex"><Grip /></div>
    </div>
  </div>
);

const Properties = () => (
  <div className="absolute left-[14px] top-[547px] w-[281px] h-[461px] bg-[#f0f0f0] shadow-[0_1px_6px_rgba(0,0,0,0.35)] flex flex-col text-[15.5px] text-[#222]">
    <ToolTitle title="Properties - Module1" h="h-[43px]" />
    <div className="h-[25px] mt-[4px] mr-[2px] bg-white border border-[#666] flex items-center justify-between pl-[3px] pr-[7px] shrink-0">
      <span><b>Module1</b> Module</span><Chev d="down" s={12} c="#666" />
    </div>
    <div className="h-[29px] flex items-end shrink-0 pl-[1px] text-[15px]">
      <div className="w-[88px] h-[26px] leading-[24px] text-center bg-[#f7f7f7] border-x border-t border-[#e0e0e0]">Alphabetic</div>
      <div className="w-[90px] h-[23px] leading-[23px] text-center border-r border-t border-[#e0e0e0]">Categorized</div>
    </div>
    <div className="flex-1 mx-[4px] mb-[3px] border-2 border-[#dcdcdc] bg-white outline outline-1 outline-[#8a8a8a] outline-offset-[-3px] p-[2px] min-h-0">
      <div className="h-[24px] flex border-b border-[#c0c0c0] leading-[23px]">
        <div className="w-[57px] bg-[#f0f0f0] border-r border-[#c0c0c0] pl-px whitespace-nowrap">(Name)</div>
        <div className="pl-[2px]">Module1</div>
      </div>
    </div>
  </div>
);

const Immediate = () => (
  <div className="absolute left-[300px] top-[705px] w-[711px] h-[244px] bg-[#f0f0f0] shadow-[0_1px_6px_rgba(0,0,0,0.35)] flex flex-col">
    <ToolTitle title="Immediate" />
    <div className="flex-1 flex flex-col border-t-2 border-[#707070] border-l border-l-[#707070] ml-px min-h-0">
      <div className="flex-1 flex min-h-0">
        <div className="w-[682px] bg-white shrink-0" />
        <VScroll w="w-[24px]" before="h-[25px]" thumb="h-[118px]" after="h-[26px]" />
      </div>
      <div className="h-[25px] shrink-0 flex items-center bg-[#f0f0f0] border-b-2 border-[#dcdcdc]">
        <div className="w-[26px] flex justify-center"><Chev d="left" /></div>
        <div className="w-[34px] h-full bg-[#cdcdcd]" />
        <div className="w-[601px]" />
        <Chev d="right" />
      </div>
    </div>
  </div>
);

const IDE = () => (
  <div className="absolute left-[28px] top-0 w-[959px] h-[1019px] bg-[#ababab] border-l border-[#555] shadow-[6px_0_10px_rgba(0,0,0,0.28)] flex flex-col">
    <div className="h-[45px] shrink-0 bg-white border-t-2 border-[#666] flex items-center relative text-[17px] text-[#222]">
      <div className="w-[342px] text-right whitespace-nowrap overflow-hidden">Microsoft Visual Basic for Applications</div>
      <div className="flex-1" />
      <div className="w-[16px] h-px bg-black mr-[53px]" />
      <div className="w-[15px] h-[15px] border border-black mr-[55px]" />
      <div className="mr-[28px] flex"><svg width="16" height="16" viewBox="0 0 16 16" stroke="#111"><path d="M1 1l14 14M15 1L1 15"/></svg></div>
    </div>
    <div className="h-[38px] shrink-0 bg-[#f8f8f8] flex items-center text-[16.5px] text-[#222] pl-[230px]">
      {[["F","ormat","w-[77px]"],["D","ebug","w-[72px]"],["R","un","w-[48px]"],["T","ools","w-[61px]"],["A","dd-Ins","w-[82px]"],["W","indow","w-[84px]"],["H","elp","w-[50px]"]].map(([u, r, w], i) => (
        <div key={u} className={`${w} whitespace-nowrap ${i === 0 ? "text-right pr-[18px]" : ""}`}><span className="underline">{u}</span>{r}</div>
      ))}
    </div>
    <div className="h-[37px] shrink-0 bg-gradient-to-b from-[#fbfbfb] to-[#f4f4f4] border-b border-[#8a8a8a] flex items-center relative pb-[2px]">
      <div className="w-[276px] shrink-0" />
      <TbSep />
      <div className="w-[3px]" />
      <div className="w-[34px] flex justify-center"><Undo2 size={26} strokeWidth={3.2} color="#3b78c8" /></div>
      <div className="w-[34px] flex justify-center"><Redo2 size={26} strokeWidth={3.2} color="#d4d4d4" /></div>
      <TbSep mx="ml-[3px]" />
      <div className="w-[36px] flex justify-center"><div className="w-0 h-0 border-y-[8px] border-y-transparent border-l-[10px] border-l-[#2da32d]" /></div>
      <div className="w-[33px] flex justify-center gap-[3px]"><div className="w-[5px] h-[17px] bg-[#3f6fc0] border border-[#8fb0e0]" /><div className="w-[5px] h-[17px] bg-[#3f6fc0] border border-[#8fb0e0]" /></div>
      <div className="w-[35px] flex justify-center"><div className="w-[14px] h-[14px] bg-[#4f7fd0] border border-[#8fb0e0]" /></div>
      <div className="w-[33px] flex justify-center"><VbDesign /></div>
      <TbSep mx="ml-[1px]" />
      <div className="w-[39px] flex justify-center"><VbProj /></div>
      <div className="w-[33px] flex justify-center"><VbProps /></div>
      <div className="w-[35px] flex justify-center"><VbBox /></div>
      <div className="w-[34px] flex justify-center"><VbTools /></div>
      <TbSep mx="ml-[2px]" />
      <div className="w-[39px] flex justify-center"><VbHelp /></div>
      <div className="absolute right-0 top-0 h-[37px] w-[17px] bg-[#aeaeae] flex flex-col items-center pt-[6px]">
        <div className="flex gap-[3px]"><div className="w-0 h-0 border-y-[4px] border-y-transparent border-l-[5px] border-l-black" /><div className="w-0 h-0 border-y-[4px] border-y-transparent border-l-[5px] border-l-black" /></div>
        <div className="mt-[6px] w-[11px] h-px bg-black" />
        <div className="mt-[2px] w-0 h-0 border-x-[6px] border-x-transparent border-t-[7px] border-t-black" />
      </div>
    </div>
    <div className="flex-1 relative bg-[#ababab]">
      <CodeWindow />
    </div>
    <div className="h-[2px] bg-white shrink-0" />
  </div>
);

const WinLogo = () => (
  <svg width="24" height="24" viewBox="0 0 24 24" fill="#000"><path d="M0 3.5l10-1.4V11.4H0zM11 2L24 0v11.4H11zM0 12.6h10v9.3L0 20.5zM11 12.6h13V24l-13-1.9z"/></svg>
);
const EdgeIcon = () => (
  <svg width="36" height="36" viewBox="0 0 36 36"><defs><linearGradient id="eg" x1="0" y1="0" x2="1" y2="1"><stop offset="0" stopColor="#2fb5d8"/><stop offset=".5" stopColor="#47d08a"/><stop offset="1" stopColor="#8fe05a"/></linearGradient><linearGradient id="eb" x1="0" y1="0" x2="1" y2="1"><stop offset="0" stopColor="#1f9fd8"/><stop offset="1" stopColor="#0c4a9c"/></linearGradient></defs><circle cx="18" cy="18" r="17" fill="url(#eg)"/><path d="M2 20C2 8 12 3 19 3c-9 3-12 10-9 17 2 6 10 11 17 8 2-1 4-2 6-4-3 8-9 11-15 11C10 35 2 29 2 20z" fill="url(#eb)"/><path d="M13 20c0-4 4-6 8-6s7 3 7 6c0 2-2 3-5 3-2 0-3-1-2-2-3 0-5 2-2 5-4-1-6-3-6-6z" fill="#f3f1e2"/></svg>
);
const Explorer = () => (
  <svg width="32" height="32" viewBox="0 0 32 32"><path d="M1 3h12l2 3h16v10H1z" fill="#e2a41b"/><rect x="1" y="8" width="30" height="23" rx="1" fill="#fbd24f"/><path d="M10 31V19h12v12h-4v-7h-4v7z" fill="#2e8fd8"/></svg>
);
const Store = () => (
  <svg width="36" height="36" viewBox="0 0 36 36"><path d="M12 8V5a6 4 0 0 1 12 0v3" fill="none" stroke="#000" strokeWidth="2.4"/><rect x="2" y="8" width="32" height="27" rx="1" fill="#000"/><rect x="11" y="13" width="6.5" height="6.5" fill="#f25022"/><rect x="18.5" y="13" width="6.5" height="6.5" fill="#7fba00"/><rect x="11" y="20.5" width="6.5" height="6.5" fill="#00a4ef"/><rect x="18.5" y="20.5" width="6.5" height="6.5" fill="#ffb900"/></svg>
);
const Snip = () => (
  <svg width="36" height="38" viewBox="0 0 36 38" fill="none"><circle cx="12" cy="12" r="11" stroke="#e05050" strokeWidth="1.4" fill="#f6f3ea"/><circle cx="10" cy="18" r="8" stroke="#e88a8a" strokeWidth="1"/><path d="M8 4l16 22M22 4L14 20" stroke="#9a9a9a" strokeWidth="2.4"/><circle cx="26" cy="30" r="5" stroke="#1f8fd8" strokeWidth="2"/><circle cx="18" cy="31" r="3" stroke="#1f8fd8" strokeWidth="1.6"/></svg>
);
const Word = () => (
  <svg width="36" height="32" viewBox="0 0 36 32"><rect x="8" y="0" width="28" height="32" rx="1.5" fill="#41a5ee"/><rect x="8" y="8" width="28" height="8" fill="#2b7cd3"/><rect x="8" y="16" width="28" height="8" fill="#185abd"/><rect x="8" y="24" width="28" height="8" fill="#103f91"/><rect x="0" y="8" width="18" height="18" rx="1.5" fill="#185abd"/><text x="9" y="22" textAnchor="middle" fontSize="13" fontWeight="700" fill="#fff" fontFamily="Liberation Sans">W</text></svg>
);
const ExcelI = () => (
  <svg width="36" height="32" viewBox="0 0 36 32"><rect x="8" y="0" width="28" height="32" rx="1.5" fill="#21a366"/><rect x="22" y="0" width="14" height="8" fill="#33c481"/><rect x="22" y="8" width="14" height="8" fill="#21a366"/><rect x="8" y="8" width="14" height="8" fill="#107c41"/><rect x="22" y="16" width="14" height="8" fill="#107c41"/><rect x="8" y="16" width="14" height="16" fill="#185c37"/><rect x="22" y="24" width="14" height="8" fill="#185c37"/><rect x="0" y="8" width="18" height="18" rx="1.5" fill="#107c41"/><text x="9" y="22" textAnchor="middle" fontSize="13" fontWeight="700" fill="#fff" fontFamily="Liberation Sans">X</text></svg>
);
const Chrome = () => (
  <svg width="34" height="34" viewBox="0 0 48 48"><circle cx="24" cy="24" r="23" fill="#4caf50"/><path d="M24 1a23 23 0 0 1 20 11.5H24a11.5 11.5 0 0 0-10 5.8L4.2 12.5A23 23 0 0 1 24 1z" fill="#db4437"/><path d="M44 12.5A23 23 0 0 1 24 47l10-17.2a11.5 11.5 0 0 0 0-17.3z" fill="#fbc02d"/><circle cx="24" cy="24" r="11" fill="#fff"/><circle cx="24" cy="24" r="8.5" fill="#4285f4"/></svg>
);
const TI = ({ children }) => <div className="w-[75px] shrink-0 h-full flex items-center justify-center relative">{children}</div>;

const Taskbar = () => (
  <div className="h-[60px] shrink-0 flex items-stretch bg-gradient-to-r from-[#dadad0] via-[#eae6d4] to-[#e7e5da] font-['Noto_Sans',sans-serif] text-[#222]">
    <div className="w-[74px] shrink-0 flex items-center justify-center"><WinLogo /></div>
    <div className="w-[513px] shrink-0 mt-[2px] mb-[2px] bg-white border-r border-[#c8c8c8] flex items-center pl-[16px] gap-[17px] text-[21.5px] text-[#333]">
      <Search size={26} strokeWidth={1.5} color="#111" className="-scale-x-100" />
      <span className="pt-[2px]">Type here to search</span>
    </div>
    <div className="w-[72px] shrink-0 flex items-center justify-center"><svg width="24" height="24" viewBox="0 0 24 24" fill="none" stroke="#111" strokeWidth="1.2"><path d="M1 1h14M4 4h12v16H4zM1 23h14M20 1v6M20 17v6"/><rect x="19" y="10" width="2.5" height="3" fill="#111"/></svg></div>
    <div className="w-[3px] shrink-0" />
    <TI><EdgeIcon /></TI>
    <TI><Explorer /></TI>
    <TI><Store /></TI>
    <TI><Snip /></TI>
    <TI><Word /></TI>
    <TI><div className="absolute inset-y-0 left-[2px] right-[6px] bg-[#f4f2e9]" /><div className="relative"><ExcelI /></div><div className="absolute bottom-0 left-[2px] right-[6px] h-[3px] bg-[#0a72c8]" /></TI>
    <TI><Chrome /><div className="absolute bottom-0 left-[8px] right-[7px] h-[3px] bg-[#0a72c8]" /></TI>
    <div className="flex-1" />
    <div className="w-[44px] flex items-center justify-center"><svg width="34" height="36" viewBox="0 0 34 36"><circle cx="15" cy="14" r="13" fill="#f6c53d"/><path d="M5 34a7 7 0 0 1-1-14 9 9 0 0 1 17-3 8 8 0 0 1 7 9 5 5 0 0 1 0 8z" fill="#c5e2f6" stroke="#8fc6e8"/></svg></div>
    <div className="w-[66px] pl-[7px] flex items-center text-[20px] whitespace-nowrap">36°C</div>
    <div className="w-[46px] flex items-center justify-center"><Chev d="up" s={20} c="#222" /></div>
    <div className="w-[31px] flex items-center justify-center"><svg width="18" height="26" viewBox="0 0 18 26" fill="none" stroke="#111" strokeWidth="1.2"><rect x="2" y="6" width="9" height="14" rx="1"/><path d="M11 10l5-2v10l-5-2M3 2h8M3 24h8" /></svg></div>
    <div className="w-[35px] flex items-center justify-center"><svg width="24" height="14" viewBox="0 0 24 14" fill="none" stroke="#111"><rect x=".5" y=".5" width="21" height="13"/><rect x="2" y="2" width="11" height="10" fill="#111"/><rect x="22" y="4" width="2" height="6" fill="#111"/></svg></div>
    <div className="w-[38px] flex items-center justify-center"><svg width="22" height="22" viewBox="0 0 22 22" fill="none" stroke="#333" strokeWidth="1.1"><path d="M1 21C1 10 10 1 21 1M5 21C5 12 12 5 21 5M9 21c0-7 5-12 12-12M13 21c0-4 3-8 8-8" strokeDasharray="3 1"/><rect x="18" y="18" width="3" height="3" fill="#111"/></svg></div>
    <div className="w-[29px] flex items-center justify-center"><svg width="24" height="24" viewBox="0 0 24 24" fill="none" stroke="#222" strokeWidth="1.2"><path d="M2 9h4l6-6v18l-6-6H2zM15 8c2 2 2 6 0 8M18 5c4 4 4 10 0 14"/></svg></div>
    <div className="w-[63px] flex items-center justify-center text-[18px]">ENG</div>
    <div className="w-[95px] flex flex-col items-center justify-center text-[17.5px] leading-[29px]"><div>3:37 PM</div><div>7/3/2021</div></div>
    <div className="w-[70px] flex items-center justify-center"><svg width="26" height="28" viewBox="0 0 26 28" fill="none" stroke="#111" strokeWidth="1.2"><path d="M1 1h24v20H17l-4 5-4-5H1z"/></svg></div>
    <div className="w-[15px]" />
  </div>
);

export default function App() {
  return (
    <div className="w-[1920px] h-[1080px] overflow-hidden flex flex-col bg-white font-['Noto_Sans',sans-serif]">
      <div className="relative h-[1020px] shrink-0 bg-white overflow-hidden">
        <div className="absolute left-0 top-0 w-[11px] h-[50px] bg-[#e8ecf0] rounded-bl-[6px]" />
        <Excel />
        <IDE />
        <Locals />
        <Project />
        <Properties />
        <Immediate />
      </div>
      <Taskbar />
    </div>
  );
}
